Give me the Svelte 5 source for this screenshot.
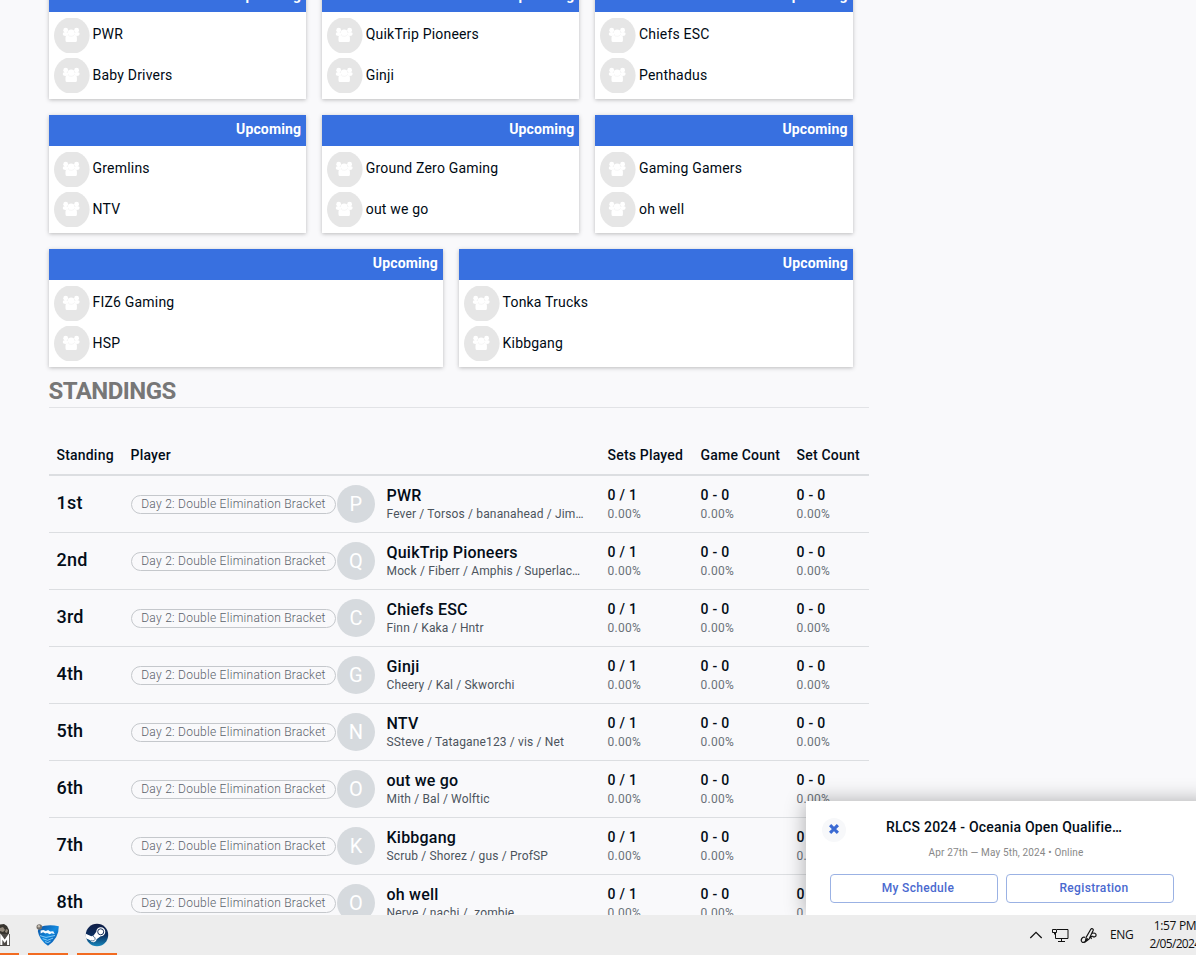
<script>
  const rows = [
    [['PWR', 'Baby Drivers'], ['QuikTrip Pioneers', 'Ginji'], ['Chiefs ESC', 'Penthadus']],
    [['Gremlins', 'NTV'], ['Ground Zero Gaming', 'out we go'], ['Gaming Gamers', 'oh well']],
    [['FIZ6 Gaming', 'HSP'], ['Tonka Trucks', 'Kibbgang']]
  ];
  const standings = [
    ['1st', 'PWR', 'Fever / Torsos / bananahead / Jim…'],
    ['2nd', 'QuikTrip Pioneers', 'Mock / Fiberr / Amphis / Superlac…'],
    ['3rd', 'Chiefs ESC', 'Finn / Kaka / Hntr'],
    ['4th', 'Ginji', 'Cheery / Kal / Skworchi'],
    ['5th', 'NTV', 'SSteve / Tatagane123 / vis / Net'],
    ['6th', 'out we go', 'Mith / Bal / Wolftic'],
    ['7th', 'Kibbgang', 'Scrub / Shorez / gus / ProfSP'],
    ['8th', 'oh well', 'Nerve / nachi / .zombie.']
  ];
</script>

<div class="screen">
  <main>
    <section class="matches">
      {#each rows as row}
        <div class="match-row" class:wide={row.length === 2}>
          {#each row as teams}
            <article class="card">
              <header>Upcoming</header>
              <div class="teams">
                {#each teams as team}
                  <div class="team">
                    <svg class="avatar" width="36" height="35" viewBox="0 0 36 35">
                      <ellipse cx="17.8" cy="17.5" rx="17.8" ry="18.3" fill="#e6e6e6" />
                      <g fill="#fff">
                        <circle cx="11.7" cy="12.2" r="2.4" />
                        <circle cx="22.6" cy="12.2" r="2.4" />
                        <ellipse cx="11.6" cy="16" rx="2.8" ry="1.9" />
                        <ellipse cx="22.8" cy="16" rx="2.8" ry="1.9" />
                        <path d="M14.2 17h6q2.7 0 2.7 2.6v3q0 1.5-1.5 1.5h-8.4q-1.5 0-1.5-1.5v-3q0-2.6 2.7-2.6z" />
                        <circle cx="17.2" cy="14.8" r="3.4" />
                      </g>
                      <path d="M14 16.6q1 1.7 3.2 1.7t3.2-1.7" fill="none" stroke="#f0f0f0" stroke-width=".6" />
                    </svg>
                    <span>{team}</span>
                  </div>
                {/each}
              </div>
            </article>
          {/each}
        </div>
      {/each}
    </section>

    <h2>STANDINGS</h2>

    <section class="table">
      <div class="line head">
        <span>Standing</span><span>Player</span><span>Sets Played</span><span>Game Count</span><span>Set Count</span>
      </div>
      {#each standings as [place, name, players]}
        <div class="line entry">
          <span class="place">{place}</span>
          <div class="player">
            <span class="pill">Day 2: Double Elimination Bracket</span>
            <span class="initial">{name[0].toUpperCase()}</span>
            <div class="info"><strong>{name}</strong><small>{players}</small></div>
          </div>
          {#each ['0 / 1', '0 - 0', '0 - 0'] as score}
            <div class="score"><strong>{score}</strong><small>0.00%</small></div>
          {/each}
        </div>
      {/each}
    </section>
  </main>

  <aside class="popup">
    <div class="popup-head">
      <button class="close" aria-label="Close">
        <svg width="12" height="12" viewBox="0 0 12 12"><path d="M2.1 2.1 9.9 9.9M9.9 2.1 2.1 9.9" stroke="#3b6ad3" stroke-width="3.1" /></svg>
      </button>
      <div class="event">
        <h3>RLCS 2024 - Oceania Open Qualifie…</h3>
        <p>Apr 27th — May 5th, 2024 • Online</p>
      </div>
    </div>
    <div class="actions"><button>My Schedule</button><button>Registration</button></div>
  </aside>

  <footer>
    <div class="apps">
      <div class="app first">
        <svg width="10" height="24" viewBox="0 0 10 24">
          <path d="M0 1.5 4 1l3 2 2 4v6H0z" fill="#37342f" />
          <path d="M0 5l3-1 2 3-2 2-3-1zM6 6l2 1-1 3-2-1z" fill="#93897c" />
          <path d="M0 11h10v12H0z" fill="#4d4a47" />
          <path d="M1.3 22v-8.5l3.4 4.8 3.4-4.8V22" fill="none" stroke="#fff" stroke-width="2.1" />
        </svg>
      </div>
      <div class="app">
        <svg width="24" height="24" viewBox="0 0 24 24">
          <defs><linearGradient id="shield" x1="0" y1="0" x2="1" y2="1"><stop offset="0" stop-color="#0a4c9d" /><stop offset=".5" stop-color="#1289de" /><stop offset="1" stop-color="#07479a" /></linearGradient></defs>
          <path d="M3 4.2Q12 1 22.8 3.2 23 15 12 22.8 3.2 17 1.8 8z" fill="url(#shield)" />
          <path d="m4.6 7.6 2.8-.6 2.5 1 2.2-.9 2.1 1.5 3-.3 1.5 2.6-3.2-.6-1.7 1-2.7-1.4-1.8.5-2.2-1.2-2.5 1.2z" fill="#f4faff" />
          <path d="m4 12.6 6 1.8 9-1.9M6.6 15.6l4.9 1.7 5.6-2.2M9 18.6l2.8 1 2.8-1.5" fill="none" stroke="#8fd0fa" stroke-width=".9" />
          <circle cx="3.3" cy="4" r="2.8" fill="#77716a" /><circle cx="2.9" cy="3.2" r="1.2" fill="#c5bdb2" />
        </svg>
      </div>
      <div class="app">
        <svg width="24" height="24" viewBox="0 0 24 24">
          <defs><linearGradient id="steam" x1="0" y1="0" x2="0" y2="1"><stop offset="0" stop-color="#101d45" /><stop offset=".5" stop-color="#0b2d5e" /><stop offset="1" stop-color="#1687bd" /></linearGradient></defs>
          <circle cx="12" cy="12" r="11.2" fill="url(#steam)" />
          <path d="m.8 10.7 5.5 2.5q1-.6 2.1-.4l2.9-4A4.5 4.5 0 1 1 15.7 13.2l-4.1 3a3.2 3.2 0 0 1-6.2 1L1.3 15.5q-.8-2.2-.5-4.8z" fill="#fff" />
          <circle cx="15.7" cy="8.8" r="3" fill="#fff" stroke="#17315b" stroke-width="1" />
          <path d="m6.2 17.3 1.2.5a2.2 2.2 0 0 0 1.7-4l-1.2-.5" fill="none" stroke="#375a82" stroke-width=".8" />
        </svg>
      </div>
    </div>
    <div class="tray">
      <svg class="chevron" width="14" height="8" viewBox="0 0 14 8"><path d="m1.3 7 5.7-5.7L12.7 7" fill="none" stroke="#111" stroke-width="1.25" /></svg>
      <svg class="network" width="17" height="15" viewBox="0 0 17 15" fill="none" stroke="#111"><path d="M5 1.5h11v9H3.5V5M9.5 10.5v3M6 13.5h7M.5 1.5h4v3h-4zM2.5 4.5v2" /></svg>
      <svg class="pen" width="18" height="18" viewBox="0 0 18 18" fill="none" stroke="#111" stroke-width="1.2"><path d="M5 10.4C2 9.2.3 13.4 2 14.9c2.3 1.5 4.4-1.2 5.6-3.7M5.3 14.8l.9-4.7 4.6-7.8c.9-1.4 3-.3 2.3 1.3L9 12.2zM12.4 6.4c1.5-.9 3.7-.1 3.7 1.7 0 1.7-2.1 2.2-3.3 1.3-1.6-.6-2.6.9-1.2 2.4" /></svg>
      <span class="lang">ENG</span>
      <div class="clock"><span>1:57 PM</span><span class="date">2/05/2024</span></div>
    </div>
  </footer>
</div>

<style>
  :global(body) { overflow: hidden; }
  .screen { box-sizing: border-box; position: relative; width: 1196px; height: 955px; overflow: hidden; display: flex; flex-direction: column; background: #f9f9fb; color: #030d18; font-family: Roboto, sans-serif; letter-spacing: .2px; }
  .screen *, .screen *::before { box-sizing: border-box; }
  main { height: 915px; padding-left: 49px; overflow: hidden; flex: none; }
  .matches { margin-top: -19px; display: flex; flex-direction: column; gap: 16px; }
  .match-row { display: grid; grid-template-columns: repeat(3, 257.2px); gap: 16px; }
  .match-row.wide { grid-template-columns: repeat(2, 394px); }
  .card { height: 118px; background: #fff; box-shadow: 0 1px 4px rgba(0, 0, 0, .25); }
  .card header { height: 31px; padding-right: 5px; line-height: 29px; text-align: right; color: #fff; background: #3870e0; font-size: 14px; font-weight: 700; letter-spacing: .15px; }
  .teams { display: flex; flex-direction: column; gap: 5px; padding: 6px 5px 0; }
  .team { display: flex; gap: 2.6px; height: 35px; font-size: 14px; font-weight: 450; line-height: 34px; letter-spacing: .19px; color: #000a14; }
  .team:first-child { line-height: 32px; }
  h2 { width: 820px; height: 41px; margin: 0; padding-top: 10px; border-bottom: 1px solid #e2e3e6; font-size: 24px; line-height: 28px; color: #777; letter-spacing: -.55px; text-indent: -.5px; }
  .table { width: 820px; }
  .line { display: grid; grid-template-columns: 74px 477px 93px 96px 80px; }
  .head { height: 68px; border-bottom: 2px solid #dcdee1; padding-top: 37px; font-size: 14px; line-height: 20px; font-weight: 500; }
  .head > span { padding-left: 7.5px; white-space: nowrap; }
  .entry { height: 57px; border-bottom: 1px solid #dcdee1; align-items: start; }
  .place { padding: 14px 0 0 7.5px; font-size: 18px; line-height: 26px; font-weight: 500; }
  .player { padding: 9px 0 0 8px; display: flex; align-items: flex-start; }
  .pill { width: 205px; height: 19px; margin-top: 10px; border: 1px solid #c5c8cc; border-radius: 10px; text-align: center; white-space: nowrap; font-size: 12px; font-weight: 300; line-height: 17px; color: #59616a; letter-spacing: .27px; }
  .initial { width: 38px; height: 38px; margin-left: 1px; border-radius: 50%; background: #d6dade; color: #fff; font-size: 20px; line-height: 38px; text-align: center; font-weight: 450; }
  .info, .score { display: flex; flex-direction: column; white-space: nowrap; }
  .info { margin-left: 11.5px; }
  strong { font-weight: 500; }
  .info strong { font-size: 16px; line-height: 21px; height: 21px; letter-spacing: .22px; }
  small { font-size: 12px; line-height: 16px; color: #4c545d; letter-spacing: .15px; }
  .score { padding: 9px 0 0 7.5px; }
  .score strong { font-size: 14px; line-height: 21px; height: 21px; letter-spacing: .25px; }
  .score small { color: #6b7279; letter-spacing: .25px; }
  .popup { position: absolute; left: 806px; top: 801px; width: 408px; height: 114px; padding: 17px 16px 0; background: #fff; box-shadow: 0 0 20px rgba(0, 0, 0, .32); clip-path: inset(-30px -30px 0 -30px); }
  .popup-head { display: flex; }
  .close { display: grid; place-items: center; flex: none; width: 24px; height: 24px; padding: 0 0 2px; border: 0; border-radius: 50%; background: #f7f8fa; }
  .event { width: 308px; margin-left: 4px; white-space: nowrap; text-align: center; }
  h3 { margin: 0; font-size: 14px; line-height: 18px; font-weight: 500; }
  p { margin: 10px 0 0 4px; font-size: 10px; line-height: 13px; color: #888; letter-spacing: .15px; }
  .actions { display: flex; gap: 8px; padding: 15px 0 0 8px; }
  .actions button { width: 168px; height: 29px; padding: 0 0 2px 8px; border: 1px solid #9bb2e4; border-radius: 4px; background: #fff; color: #4a69cf; font: 500 12px Roboto, sans-serif; letter-spacing: .33px; }
  footer { position: relative; height: 40px; display: flex; justify-content: space-between; background: #ededed; letter-spacing: 0; }
  .apps { display: flex; gap: 9px; }
  .app { display: flex; justify-content: center; width: 40px; height: 40px; padding-top: 8px; border-bottom: 2px solid #f26b21; }
  .app.first { width: 19px; justify-content: flex-start; }
  .tray { display: flex; flex: none; width: 166px; color: #111; font-family: "Open Sans", sans-serif; font-size: 12px; }
  .tray svg, .lang, .clock { flex: none; }
  .chevron { margin-top: 16px; margin-left: -1px; }
  .network { margin: 13px 0 0 9px; }
  .pen { margin: 12px 0 0 11px; }
  .lang { margin: 11px 0 0 12px; width: 27px; line-height: 17px; letter-spacing: -.4px; }
  .clock { display: flex; flex-direction: column; width: 60px; margin-left: 8px; padding-top: 2px; line-height: 18px; text-align: center; letter-spacing: -.35px; }
  .date { letter-spacing: -.65px; }
</style>
